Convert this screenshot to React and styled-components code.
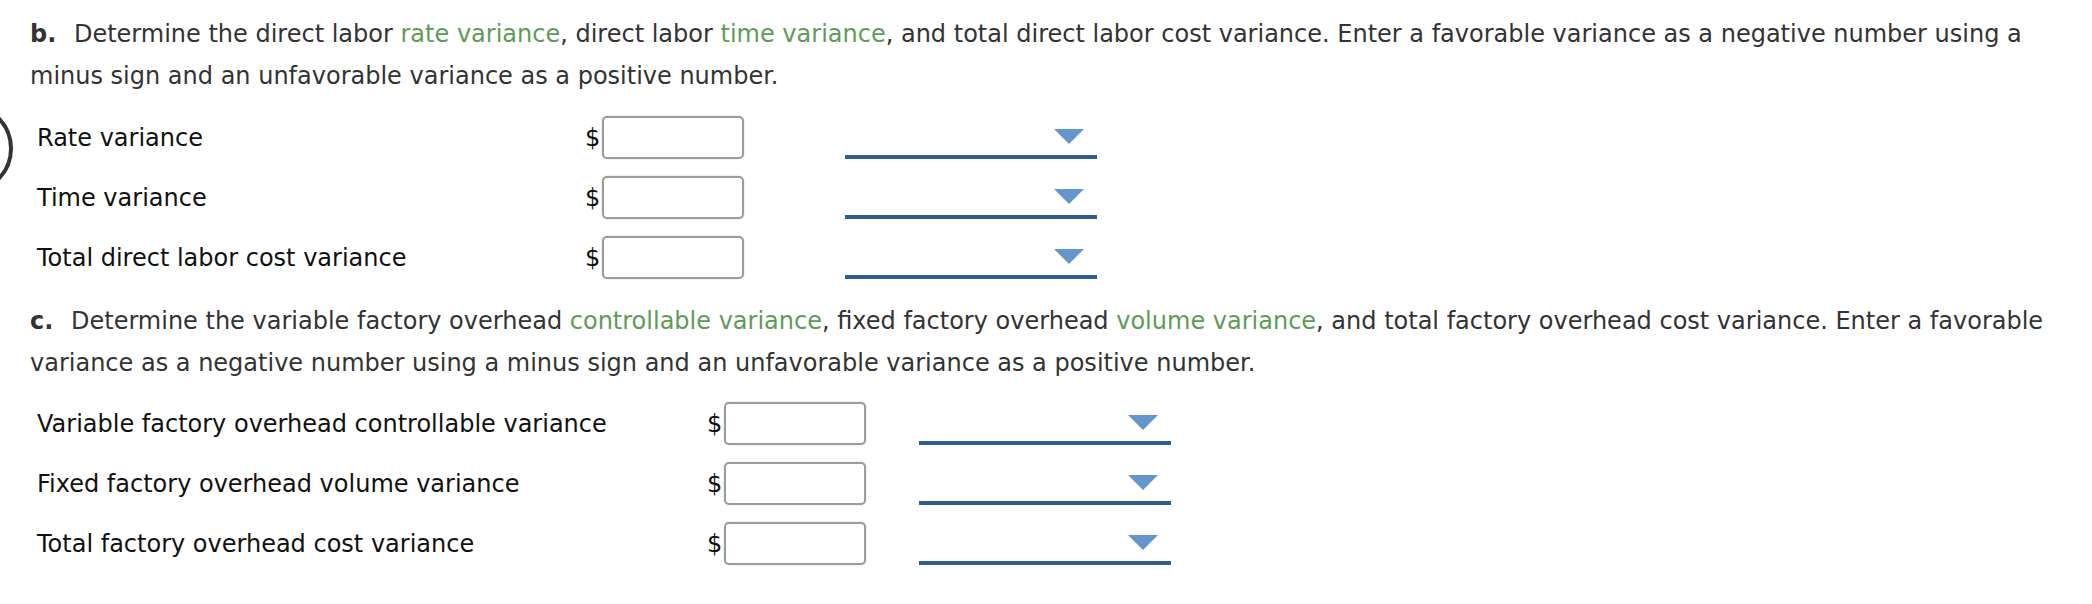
import React from "react";
import styled, { createGlobalStyle } from "styled-components";

const GlobalStyle = createGlobalStyle`
  body {
    margin: 0;
    background: #ffffff;
    font-family: "DejaVu Sans", Verdana, sans-serif;
  }
`;

const Page = styled.div`
  position: relative;
  padding: 13px 30px 0 30px;
  overflow: hidden;
  height: 604px;
  box-sizing: border-box;
`;

// partly hidden ring on the left edge, drawn over the page
const FocusRing = styled.div`
  position: absolute;
  left: -78px;
  top: 103px;
  width: 91px;
  height: 91px;
  box-sizing: border-box;
  border: 4px solid #333333;
  border-radius: 50%;
`;

const Prompt = styled.p`
  margin: ${(p) => p.$top || 0}px 0 0 0;
  font-size: 24px;
  line-height: 42px;
  color: #333333;
`;

const Part = styled.strong`
  font-weight: bold;
  margin-right: 10px;
`;

const Term = styled.span`
  color: #5e9b58;
`;

const Table = styled.div`
  display: flex;
  flex-direction: column;
  gap: 17px;
  margin: ${(p) => p.$top}px 0 0 7px;
`;

const Row = styled.div`
  display: flex;
  align-items: center;
  height: 43px;
`;

const Label = styled.div`
  width: ${(p) => p.$width}px;
  font-size: 24px;
  color: #111111;
  white-space: nowrap;
`;

const Dollar = styled.span`
  font-size: 24px;
  color: #111111;
  margin-right: 2px;
`;

const AmountInput = styled.input`
  width: 142px;
  height: 43px;
  box-sizing: border-box;
  border: 2px solid #9c9c9c;
  border-radius: 5px;
  box-shadow: 0 0 2px rgba(0, 0, 0, 0.2);
  background: #ffffff;
  outline: none;
`;

const Select = styled.div`
  width: 252px;
  height: 43px;
  box-sizing: border-box;
  margin-left: ${(p) => p.$gap}px;
  border-bottom: 4px solid #2c5e93;
  display: flex;
  justify-content: flex-end;
  align-items: flex-start;
  padding: 13px 13px 0 0;
`;

const Caret = () => (
  <svg width="30" height="15" viewBox="0 0 30 15">
    <polygon points="0,0 30,0 15,15" fill="#6496cb" />
  </svg>
);

const VarianceTable = ({ top, labelWidth, selectGap, rows }) => (
  <Table $top={top}>
    {rows.map((r) => (
      <Row key={r}>
        <Label $width={labelWidth}>{r}</Label>
        <Dollar>$</Dollar>
        <AmountInput type="text" />
        <Select $gap={selectGap}>
          <Caret />
        </Select>
      </Row>
    ))}
  </Table>
);

const App = () => {
  return (
    <>
      <GlobalStyle />
      <Page>
        <FocusRing />
        <Prompt>
          <Part>b.</Part> Determine the direct labor <Term>rate variance</Term>, direct
          labor <Term>time variance</Term>, and total direct labor cost variance. Enter a
          favorable variance as a negative number using a minus sign and an unfavorable
          variance as a positive number.
        </Prompt>
        <VarianceTable
          top={19}
          labelWidth={548}
          selectGap={101}
          rows={["Rate variance", "Time variance", "Total direct labor cost variance"]}
        />
        <Prompt $top={21}>
          <Part>c.</Part> Determine the variable factory overhead{" "}
          <Term>controllable variance</Term>, fixed factory overhead{" "}
          <Term>volume variance</Term>, and total factory overhead cost variance. Enter a
          favorable variance as a negative number using a minus sign and an unfavorable
          variance as a positive number.
        </Prompt>
        <VarianceTable
          top={18}
          labelWidth={670}
          selectGap={53}
          rows={[
            "Variable factory overhead controllable variance",
            "Fixed factory overhead volume variance",
            "Total factory overhead cost variance",
          ]}
        />
      </Page>
    </>
  );
};

export default App;
